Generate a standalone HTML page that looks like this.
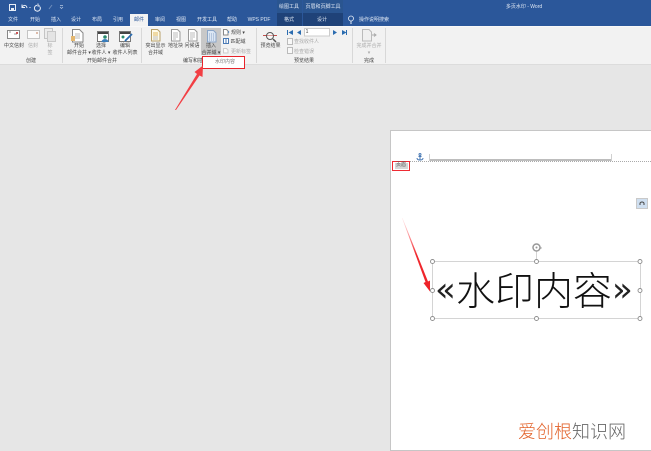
<!DOCTYPE html>
<html><head><meta charset="utf-8">
<style>
html,body{margin:0;padding:0}
body{width:651px;height:450px;overflow:hidden;position:relative;background:#e6e6e6;font-family:"Liberation Sans","Noto Sans CJK SC",sans-serif}
div,span,svg{position:absolute}
.t{font-size:5px;line-height:7px;white-space:nowrap;transform:translate(-50%,1px);color:#444;text-align:center}
.w{color:#dfe7f3}
.g{color:#aaa}
.sep{width:1px;background:#d8d8d8;top:28px;height:35px}
</style></head><body>
<div style="left:0;top:0;width:651px;height:26px;background:#2b579a"></div>
<div style="left:277px;top:0;width:25px;height:13px;background:#2a5590"></div>
<div style="left:303px;top:0;width:40px;height:13px;background:#2a5590"></div>
<div style="left:277px;top:13px;width:25px;height:13px;background:#1f4278"></div>
<div style="left:303px;top:13px;width:40px;height:13px;background:#1f4278"></div>

<!-- QAT -->
<svg style="left:0;top:0" width="80" height="13" viewBox="0 0 80 13" fill="none" stroke="#e8eef7">
<rect x="9.500" y="4.500" width="6" height="6"/><rect x="11" y="8" width="3" height="2.500" fill="#e8eef7" stroke="none"/>
<path d="M22 7c2-2.500 4.500-2 5 1M22 4.500V7.500H25"/>
<path d="M29 7h2l-1 1z" fill="#e8eef7" stroke="none"/>
<path d="M37 5.200a3 3 0 1 0 3 1.500M38 3.500v2.500h2"/>
<path d="M49 9l3-4" stroke="#6f8dbb"/><path d="M60 5.500h3M60 7l1.500 1.500L63 7" stroke="#b9c9e0" stroke-width=".7"/>
</svg>

<!-- tabs -->
<span class="t w" style="left:13px;top:16px">文件</span>
<span class="t w" style="left:35px;top:16px">开始</span>
<span class="t w" style="left:56px;top:16px">插入</span>
<span class="t w" style="left:76px;top:16px">设计</span>
<span class="t w" style="left:97px;top:16px">布局</span>
<span class="t w" style="left:118px;top:16px">引用</span>
<div style="left:130px;top:14px;width:18px;height:12px;background:#f3f3f3"></div>
<span class="t" style="left:139px;top:16px;color:#2b579a">邮件</span>
<span class="t w" style="left:160px;top:16px">审阅</span>
<span class="t w" style="left:181px;top:16px">视图</span>
<span class="t w" style="left:207px;top:16px">开发工具</span>
<span class="t w" style="left:232px;top:16px">帮助</span>
<span class="t w" style="left:259px;top:16px">WPS PDF</span>
<span class="t w" style="left:289px;top:16px">格式</span>
<span class="t w" style="left:322px;top:16px">设计</span>
<span class="t w" style="left:374px;top:16px">操作说明搜索</span>
<span class="t w" style="left:289px;top:3px">绘图工具</span>
<span class="t w" style="left:323px;top:3px">页眉和页脚工具</span>
<span class="t w" style="left:524px;top:3px">多页水印 - Word</span>
<svg style="left:347px;top:15px" width="8" height="9" viewBox="0 0 8 9" fill="none" stroke="#e8eef7" stroke-width=".8"><circle cx="4" cy="3.500" r="2.500"/><path d="M3 7h2M3.300 8.300h1.400"/></svg>

<!-- ribbon -->
<div style="left:0;top:26px;width:651px;height:38px;background:#f2f2f2;border-top:1px solid #f8f8f8;box-sizing:border-box"></div>
<div style="left:0;top:64px;width:651px;height:1px;background:#dcdcdc"></div>
<div class="sep" style="left:62px"></div><div class="sep" style="left:141px"></div><div class="sep" style="left:256px"></div><div class="sep" style="left:352px"></div><div class="sep" style="left:385px"></div>
<div style="left:201px;top:28px;width:20px;height:27px;background:#c8c8c8"></div>

<!-- ribbon icons -->
<svg style="left:0;top:26px" width="400" height="30" viewBox="0 26 400 30" fill="none">
<rect x="7.500" y="30.500" width="12" height="8" fill="#fff" stroke="#888"/><path d="M14 34h3M9 32h2" stroke="#999"/><rect x="16" y="32" width="2" height="2" fill="#c55"/>
<rect x="27.500" y="30.500" width="12" height="8" fill="#fbfbfb" stroke="#c4c4c4"/><rect x="36" y="32" width="2" height="2" fill="#dba"/>
<path d="M44.500 28.500h8v10h-8z" fill="#ececec" stroke="#c4c4c4"/><path d="M47.500 31.500h8v10h-8z" fill="#e4e4e4" stroke="#c8c8c8"/>
<path d="M72.500 29.500h7l3.500 3.500v9h-10.500z" fill="#fff" stroke="#888"/><path d="M75 34h5M75 36h5M75 38h5" stroke="#bbb"/><rect x="71" y="36" width="4" height="5" fill="#e5b870"/>
<rect x="97.500" y="31.500" width="11" height="10" fill="#fff" stroke="#777"/><rect x="98" y="32" width="10" height="2" fill="#444"/><circle cx="105" cy="37" r="1.800" fill="#2b8a6e"/><path d="M101.500 42a3.500 3 0 0 1 7 0z" fill="#3a7dbb"/>
<rect x="119.500" y="31.500" width="11" height="10" fill="#fff" stroke="#777"/><rect x="120" y="32" width="10" height="2" fill="#444"/><path d="M125 41l7-7" stroke="#2b6cb0" stroke-width="1.800"/><circle cx="123" cy="37" r="1.500" fill="#2b8a6e"/>
<path d="M151.500 29.500h6l2.500 2.500v9h-8.500z" fill="#fffbe9" stroke="#b8a06a"/><path d="M153 33h5M153 35h5" stroke="#e0b860"/><path d="M153 37h5M153 39h5" stroke="#bbb"/>
<path d="M171.500 29.500h6l2.500 2.500v9h-8.500z" fill="#fff" stroke="#999"/><path d="M173 33h5M173 35h5M173 37h5M173 39h3" stroke="#bbb"/>
<path d="M188.500 29.500h6l2.500 2.500v9h-8.500z" fill="#fff" stroke="#999"/><path d="M190 33h5M190 35h5M190 37h5M190 39h3" stroke="#bbb"/>
<path d="M207.500 30.500h6l2.500 2.500v9h-8.500z" fill="#dce7f4" stroke="#8ba6c8"/><path d="M209 34h5M209 36h5M209 38h5M209 40h5" stroke="#8ba6c8" stroke-dasharray="1 1"/>
<path d="M223.500 29.500h3l1.500 1.500v4h-4.500z" fill="#fff" stroke="#888"/><path d="M228 31l1.500 1-1.500 1z" fill="#2b6cb0"/>
<path d="M223.500 38.500h5v5h-5z" fill="#fff" stroke="#4a7ab5"/><path d="M225 40h2M225 42h2" stroke="#4a7ab5"/>
<path d="M223.500 48.500h3l1.500 1.500v3h-4.500z" fill="#fafafa" stroke="#ccc"/>
<path d="M263 35.500h14" stroke="#c0504d"/><circle cx="270" cy="36" r="3.500" stroke="#555" fill="#fff" fill-opacity=".4"/><path d="M273 39l3 3" stroke="#555" stroke-width="1.500"/>
<path d="M287.500 30v5" stroke="#2b6cb0"/><path d="M293 30l-4.500 2.500 4.500 2.500z M301 30l-4 2.500 4 2.500z M333 30l4 2.500-4 2.500z M342 30l4.500 2.500-4.500 2.500z" fill="#2b6cb0"/><path d="M346.500 30v5" stroke="#2b6cb0"/>
<rect x="304.500" y="28.500" width="25" height="7.500" fill="#fff" stroke="#ccc"/>
<rect x="287.500" y="38.500" width="5" height="6" fill="#f8f8f8" stroke="#bbb"/>
<rect x="287.500" y="47.500" width="5" height="6" fill="#f8f8f8" stroke="#bbb"/>
<path d="M362.500 29.500h6.500l2.500 2.500v9h-9z" fill="#f0f0f0" stroke="#bbb"/><path d="M372 35h3.500M374 33.500l2 1.500-2 1.500" stroke="#aaa"/>
</svg>

<!-- ribbon text -->
<span class="t" style="left:14px;top:42px">中文信封</span>
<span class="t g" style="left:33px;top:42px">信封</span>
<span class="t g" style="left:50px;top:42px">标<br>签</span>
<span class="t" style="left:79px;top:42px">开始<br>邮件合并 ▾</span>
<span class="t" style="left:101px;top:42px">选择<br>收件人 ▾</span>
<span class="t" style="left:125px;top:42px">编辑<br>收件人列表</span>
<span class="t" style="left:31px;top:57px">创建</span>
<span class="t" style="left:102px;top:57px">开始邮件合并</span>
<span class="t" style="left:155.500px;top:42px">突出显示<br>合并域</span>
<span class="t" style="left:175.500px;top:42px">地址块</span>
<span class="t" style="left:192px;top:42px">问候语</span>
<span class="t" style="left:211px;top:42px">插入<br>合并域 ▾</span>
<span class="t" style="left:238px;top:29px">规则 ▾</span>
<span class="t" style="left:238px;top:38px">匹配域</span>
<span class="t g" style="left:241px;top:47.500px">更新标签</span>
<span class="t" style="left:193px;top:57px">编写和插</span>

<!-- dropdown -->
<div style="left:202px;top:55.500px;width:43px;height:13px;background:#fff;border:1.500px solid #e8232a;box-sizing:border-box"></div>
<span class="t" style="left:225px;top:58px;color:#777">水印内容</span>

<span class="t" style="left:307px;top:28px">1</span>
<span class="t" style="left:270.500px;top:42px">预览结果</span>
<span class="t g" style="left:306.500px;top:38px">查找收件人</span>
<span class="t g" style="left:304px;top:47.500px">检查错误</span>
<span class="t" style="left:304px;top:57px">预览结果</span>
<span class="t g" style="left:369px;top:42px">完成并合并<br>▾</span>
<span class="t" style="left:369px;top:57px">完成</span>

<!-- page -->
<div style="left:390px;top:130px;width:262px;height:321px;background:#fff;border:1px solid #c6c6c6;box-sizing:border-box"></div>
<div style="left:392px;top:161px;width:259px;border-top:1px dotted #aaa;height:0"></div>
<div style="left:429px;top:158.500px;width:183px;height:2px;background:#bdbdbd"></div>
<div style="left:429px;top:154px;width:1px;height:7px;background:#d0d0d0"></div>
<div style="left:611px;top:154px;width:1px;height:7px;background:#d0d0d0"></div>
<svg style="left:416px;top:153px" width="8" height="8" viewBox="0 0 8 8" fill="none" stroke="#4a7ab5"><circle cx="4" cy="1.500" r="1"/><path d="M4 2.500V7M1 5c0 1.500 1.500 2 3 2s3-.5 3-2M2.500 3.500h3"/></svg>
<div style="left:392px;top:160.500px;width:18px;height:10px;background:#fff;border:1.500px solid #ee2b33;box-sizing:border-box"></div>
<div style="left:395px;top:163px;width:13px;height:6px;background:#d6d6d6"></div>
<span class="t" style="left:401px;top:161px;color:#555">页眉</span>
<div style="left:636px;top:198px;width:12px;height:11px;background:#cfdff0;border:1px solid #c9c9c9;box-sizing:border-box"></div>
<svg style="left:636px;top:198px" width="12" height="11" viewBox="0 0 12 11" fill="none" stroke="#444" stroke-width="1"><path d="M4 7V5.500a2 1.500 0 0 1 4 0V7"/></svg>

<!-- text box -->
<svg style="left:395px;top:210px" width="256" height="125" viewBox="395 210 256 125" fill="none">
<rect x="432.500" y="261.500" width="208" height="57" stroke="#d4d4d4"/>
<path d="M536.500 246v15" stroke="#d4d4d4"/>
<g fill="#fff" stroke="#8e8e8e" stroke-width=".9">
<circle cx="432.500" cy="261.500" r="2"/><circle cx="536.500" cy="261.500" r="2"/><circle cx="640" cy="261.500" r="2"/>
<circle cx="432.500" cy="290.500" r="2"/><circle cx="640" cy="290.500" r="2"/>
<circle cx="432.500" cy="318.500" r="2"/><circle cx="536.500" cy="318.500" r="2"/><circle cx="640" cy="318.500" r="2"/>
</g>
<circle cx="536.500" cy="247.500" r="3.500" stroke="#999" stroke-width="1.500" fill="#fff"/><circle cx="536.500" cy="247.500" r="1" fill="#999"/>
<path d="M540 247.500h2l-1 1.500z" fill="#999"/>
</svg>
<div style="left:456px;top:265px;font-size:39px;line-height:48px;color:#111;white-space:nowrap;font-family:'Noto Sans CJK SC',sans-serif;font-weight:300">水印内容</div>
<div style="left:435px;top:266px;width:20px;text-align:center;font-size:34px;line-height:48px;color:#222;font-family:'DejaVu Sans',sans-serif;font-weight:400">«</div>
<div style="left:612px;top:266px;width:20px;text-align:center;font-size:34px;line-height:48px;color:#222;font-family:'DejaVu Sans',sans-serif;font-weight:400">»</div>

<!-- arrows -->
<svg style="left:0;top:0" width="651" height="450" viewBox="0 0 651 450">
<defs><linearGradient id="a" x1="0" y1="0" x2="0" y2="1"><stop offset="0" stop-color="#ff4a50" stop-opacity=".1"/><stop offset=".5" stop-color="#f0282e"/><stop offset="1" stop-color="#ee2228"/></linearGradient></defs>
<path d="M175 110L197 74 194.500 72 203 65.500 202.500 77 199.500 75.500 176 110z" fill="#f23f44"/>
<path d="M402 218L425.500 282 423.500 283 430 291.500 430 280.500 428 281.500 402.500 218z" fill="url(#a)"/>
</svg>

<!-- watermark -->
<div style="left:518px;top:420px;font-size:18px;line-height:23px;white-space:nowrap;font-family:'Noto Sans CJK SC',sans-serif;font-weight:300;color:#666"><span style="position:static;color:#e2622a">爱创根</span><span style="position:static">知识网</span></div>
</body></html>
